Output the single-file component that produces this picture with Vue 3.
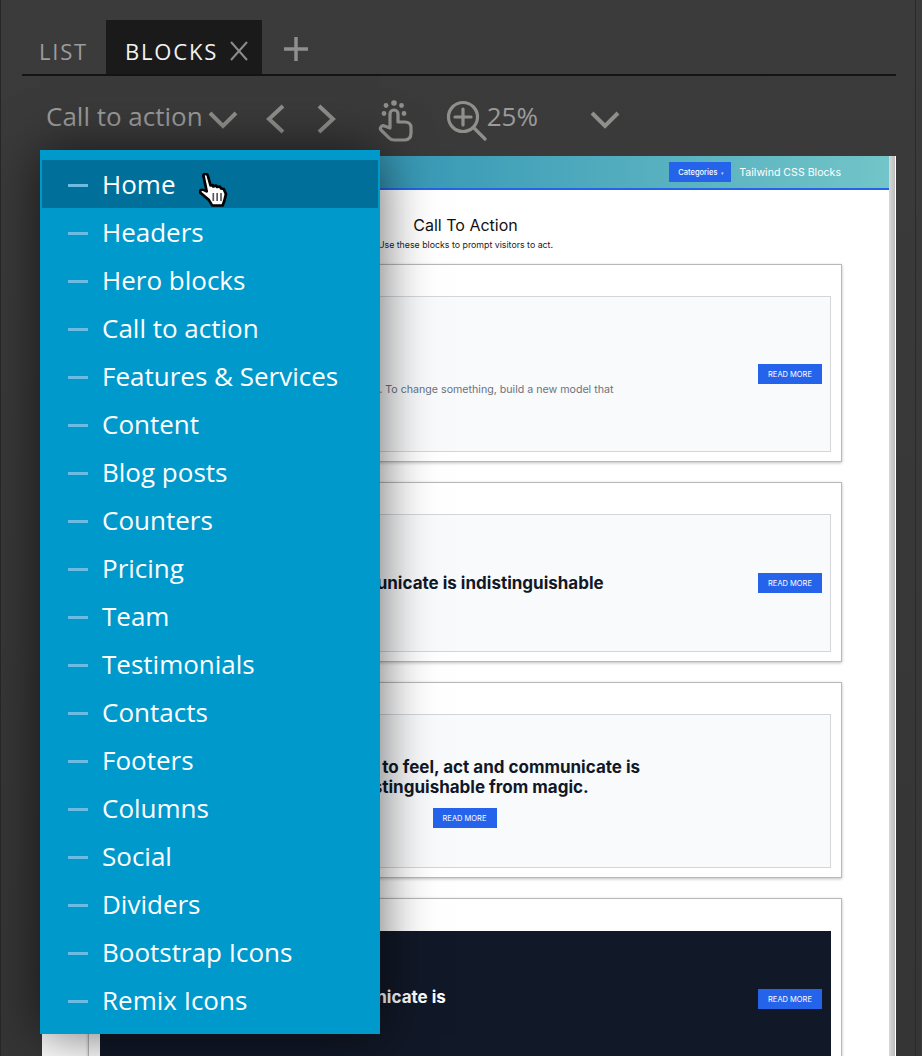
<script setup>
const menuItems = [
  'Home', 'Headers', 'Hero blocks', 'Call to action', 'Features & Services', 'Content',
  'Blog posts', 'Counters', 'Pricing', 'Team', 'Testimonials', 'Contacts', 'Footers',
  'Columns', 'Social', 'Dividers', 'Bootstrap Icons', 'Remix Icons'
]
</script>

<template>
  <div class="panel">
    <div class="tabs">
      <div class="tab">LIST</div>
      <div class="tab active">
        BLOCKS
        <svg class="tab-close" width="20" height="20" viewBox="0 0 20 20"><path d="M2 1l16 18M18 1L2 19" /></svg>
      </div>
      <svg class="tab-add" width="26" height="26" viewBox="0 0 26 26"><path d="M13 1v24M1 13h24" /></svg>
    </div>

    <div class="toolbar">
      <span class="section-name">Call to action</span>
      <svg class="tool chevron" width="30" height="18" viewBox="0 0 30 18"><path d="M2 2l13 13L28 2" /></svg>
      <svg class="tool prev" width="20" height="30" viewBox="0 0 20 30"><path d="M17 2L3 15l14 13" /></svg>
      <svg class="tool next" width="20" height="30" viewBox="0 0 20 30"><path d="M3 2l14 13L3 28" /></svg>
      <svg class="tool hand" width="36" height="42" viewBox="0 0 36 42">
        <path class="thin" d="M12 28V14a4 4 0 0 1 8 0v8h7c3.500 0 6 2 6 5.500V33c0 4.500-2.500 7-6.500 7H16c-2 0-3.500-.7-5-2.200L3 30c-1.800-2 .8-5.500 3.500-4z" />
        <circle class="dot" cx="16" cy="3" r="2.800" />
        <circle class="dot" cx="8" cy="5.500" r="2.400" />
        <circle class="dot" cx="23.500" cy="5.500" r="2.400" />
        <circle class="dot" cx="6" cy="13.500" r="2.400" />
        <circle class="dot" cx="26" cy="13.500" r="2.400" />
      </svg>
      <svg class="tool zoom" width="41" height="41" viewBox="0 0 41 41">
        <circle class="thin" cx="17" cy="17" r="14.500" />
        <path class="thin" d="M9 17h16M17 9v16" />
        <path class="thin" d="M27.500 27.500L39 39" />
      </svg>
      <span class="zoom-value">25%</span>
      <svg class="tool chevron view" width="30" height="18" viewBox="0 0 30 18"><path d="M2 2l13 13L28 2" /></svg>
    </div>

    <div class="stage">
      <div class="preview">
        <div class="page">
          <header class="page-header">
            <span class="categories">Categories <i>▾</i></span>
            <span class="brand">Tailwind CSS Blocks</span>
          </header>
          <div class="page-intro">
            <h1>Call To Action</h1>
            <p>Use these blocks to prompt visitors to act.</p>
          </div>

          <section class="block">
            <div class="block-inner cta-one">
              <div>
                <h2>Call to action</h2>
                <p>You never change things by fighting the existing reality. To change something, build a new model that makes the existing obsolete.</p>
              </div>
              <a class="read-more">READ MORE</a>
            </div>
          </section>

          <section class="block">
            <div class="block-inner cta-two">
              <h2>To feel, act and communicate is indistinguishable</h2>
              <a class="read-more">READ MORE</a>
            </div>
          </section>

          <section class="block">
            <div class="block-inner cta-three">
              <h2>The ability to feel, act and communicate is<br>indistinguishable from magic.</h2>
              <a class="read-more">READ MORE</a>
            </div>
          </section>

          <section class="block">
            <div class="block-inner cta-four">
              <h2>To feel, act and communicate is</h2>
              <a class="read-more">READ MORE</a>
            </div>
          </section>
        </div>
        <div class="scrollbar"></div>
      </div>

      <ul class="menu">
        <li v-for="(item, i) in menuItems" :key="item" class="menu-item" :class="{ hover: i === 0 }">
          <span class="dash"></span>{{ item }}
        </li>
      </ul>

      <svg class="cursor" width="33" height="35" viewBox="0 0 30 35" preserveAspectRatio="none">
        <path d="M4 2.500c0-2 3.500-2 4 0l2.500 10 2-.5 .5 1.500 2.500-1 1 1.500 2.500-.5 1 2 2.500.5 2 5-1.500 7-1.500 4.500H12l-3-5.500-7.500-7c-1.500-2 .5-4 2.500-3l3 1.500z" fill="#fff" stroke="#000" stroke-width="2.500" stroke-linejoin="round" />
        <path d="M13 20v8M16.500 20v8M20 20v8" stroke="#555" stroke-width="1.500" fill="none" />
      </svg>
    </div>
  </div>
</template>

<style>
html, body {
  margin: 0;
  overflow: hidden;
  background: #3a3a3a;
}
</style>

<style scoped>
.panel {
  box-sizing: border-box;
  width: 922px;
  height: 1056px;
  overflow: hidden;
  padding: 20px 25px 0 22px;
  background: linear-gradient(#3b3b3b, #353535);
  border-left: 2px solid #262626;
  font-family: "Open Sans", "Liberation Sans", sans-serif;
  margin-left: -1px;
  position: relative;
}

.panel::after {
  content: "";
  position: absolute;
  top: 0;
  bottom: 0;
  right: 5px;
  width: 1px;
  background: #2a2a2a;
}

.tabs {
  display: flex;
  align-items: flex-end;
  height: 54px;
  border-bottom: 2px solid #141414;
  margin-left: -1px;
}

.tab {
  display: flex;
  align-items: center;
  height: 54px;
  padding: 8px 18px 0 17px;
  box-sizing: border-box;
  font-size: 22px;
  letter-spacing: 1.800px;
  color: #9c9c9c;
}

.tab.active {
  width: 156px;
  margin-left: 0;
  padding-left: 19px;
  padding-right: 0;
  background: #1a1a1a;
  color: #f2f2f2;
}

.tab-close {
  margin-left: 11px;
  fill: none;
  stroke: #8c8c8c;
  stroke-width: 2;
}

.tab-add {
  align-self: flex-start;
  margin: 16px 0 0 21px;
  fill: none;
  stroke: #8f8f8f;
  stroke-width: 3.500;
}

.toolbar {
  display: flex;
  align-items: center;
  height: 68px;
  padding: 6px 0 0 23px;
}

.section-name,
.zoom-value {
  font-size: 26px;
  color: #9b9b9b;
  white-space: nowrap;
}

.tool {
  flex: none;
  fill: none;
  stroke: #8f8f8b;
  stroke-width: 4;
}

.chevron {
  margin: 8px 0 0 5px;
}

.prev {
  margin: 6px 0 0 28px;
}

.next {
  margin: 6px 0 0 30px;
}

.hand {
  margin: 10px 0 0 42px;
}

.zoom {
  margin: 8px 0 0 32px;
}

.thin {
  stroke-width: 3.200;
  stroke-linecap: round;
  stroke-linejoin: round;
}

.dot {
  fill: #8f8f8b;
  stroke: none;
}

.zoom-value {
  margin: 0;
}

.view {
  margin-left: 52px;
  margin-top: 8px;
}

.stage {
  position: relative;
  height: 940px;
  margin-left: -2px;
}

.preview {
  display: flex;
  position: absolute;
  inset: 6px 0 0 21px;
  background: #fff;
  overflow: hidden;
}

.page {
  flex: 1;
  min-width: 0;
  font-family: Inter, "Liberation Sans", sans-serif;
}

.scrollbar {
  flex: none;
  width: 6px;
  margin-right: 1px;
  background: linear-gradient(90deg, #d8d8d8, #bdbdbd);
}

.page-header {
  display: flex;
  justify-content: flex-end;
  align-items: center;
  box-sizing: border-box;
  height: 34px;
  padding: 0 48px 0 0;
  background: linear-gradient(90deg, #0d78a8, #72c5c8);
  border-bottom: 2px solid #2563eb;
}

.categories {
  box-sizing: border-box;
  width: 62px;
  height: 20px;
  padding-left: 9px;
  background: #2563eb;
  color: #fff;
  font-size: 7.500px;
  font-weight: 500;
  line-height: 21px;
  white-space: nowrap;
}

.categories i {
  font-style: normal;
  font-size: 5px;
  opacity: 0.7;
  margin-left: 2px;
}

.brand {
  margin-left: 8px;
  color: #fff;
  font-size: 10.600px;
  white-space: nowrap;
}

.page-intro {
  box-sizing: border-box;
  height: 74px;
  padding: 25px 47px 0 47px;
  text-align: center;
}

.page-intro h1 {
  margin: 0;
  color: #111;
  font-size: 16px;
  font-weight: 400;
  line-height: 20px;
}

.page-intro p {
  margin: 4px 0 0;
  color: #222;
  font-size: 8.800px;
  line-height: 12px;
}

.block {
  box-sizing: border-box;
  width: 754px;
  margin: 0 0 20px 46px;
  padding: 31px 10px 9px 11px;
  border: 1px solid #b8b8bc;
  box-shadow: 0 1px 3px rgba(0, 0, 0, 0.25);
}

.block-inner {
  display: flex;
  box-sizing: border-box;
  border: 1px solid #d4d6da;
  background: #f9fafb;
}

.block-inner h2 {
  margin: 0;
  color: #111827;
  font-size: 17px;
  font-weight: 700;
  line-height: 20px;
}

.read-more {
  flex: none;
  box-sizing: border-box;
  width: 64px;
  height: 20px;
  background: #2563eb;
  color: #fff;
  font-size: 7.500px;
  font-weight: 400;
  line-height: 21px;
  text-align: center;
  white-space: nowrap;
}

.cta-one {
  justify-content: space-between;
  align-items: center;
  height: 156px;
  padding: 0 8px 0 3px;
}

.cta-one > div {
  width: 522px;
}

.cta-one h2 {
  margin-bottom: 28px;
}

.cta-one p {
  margin: 6px 0 0;
  color: #6b7280;
  font-size: 10.650px;
  line-height: 16px;
}

.cta-two {
  justify-content: space-between;
  align-items: center;
  height: 138px;
  padding: 0 8px 0 94px;
}

.cta-three {
  flex-direction: column;
  align-items: center;
  justify-content: center;
  height: 154px;
  text-align: center;
}

.cta-three h2 {
  margin-top: 3px;
}

.cta-three .read-more {
  margin: 11px 2px 0 0;
}

.cta-four {
  justify-content: space-between;
  align-items: center;
  height: 136px;
  margin-top: 1px;
  padding: 0 8px 0 83px;
  background: #111827;
  border-color: #111827;
}

.cta-four h2 {
  margin-bottom: 4px;
  color: #fff;
}

.menu {
  position: absolute;
  top: 0;
  left: 19px;
  width: 340px;
  box-sizing: border-box;
  height: 884px;
  margin: 0;
  padding: 10px 2px;
  list-style: none;
  background: #0099cc;
  box-shadow: 0 0 50px rgba(0, 0, 0, 0.6);
}

.menu-item {
  display: flex;
  align-items: center;
  height: 48px;
  padding-left: 26px;
  color: #fff;
  font-size: 26px;
  white-space: nowrap;
}

.menu-item.hover {
  background: #006f9a;
}

.dash {
  flex: none;
  width: 20px;
  height: 3px;
  margin: 2px 14px 0 0;
  background: #6cbbe2;
}

.cursor {
  position: absolute;
  left: 178px;
  top: 23px;
}
</style>
